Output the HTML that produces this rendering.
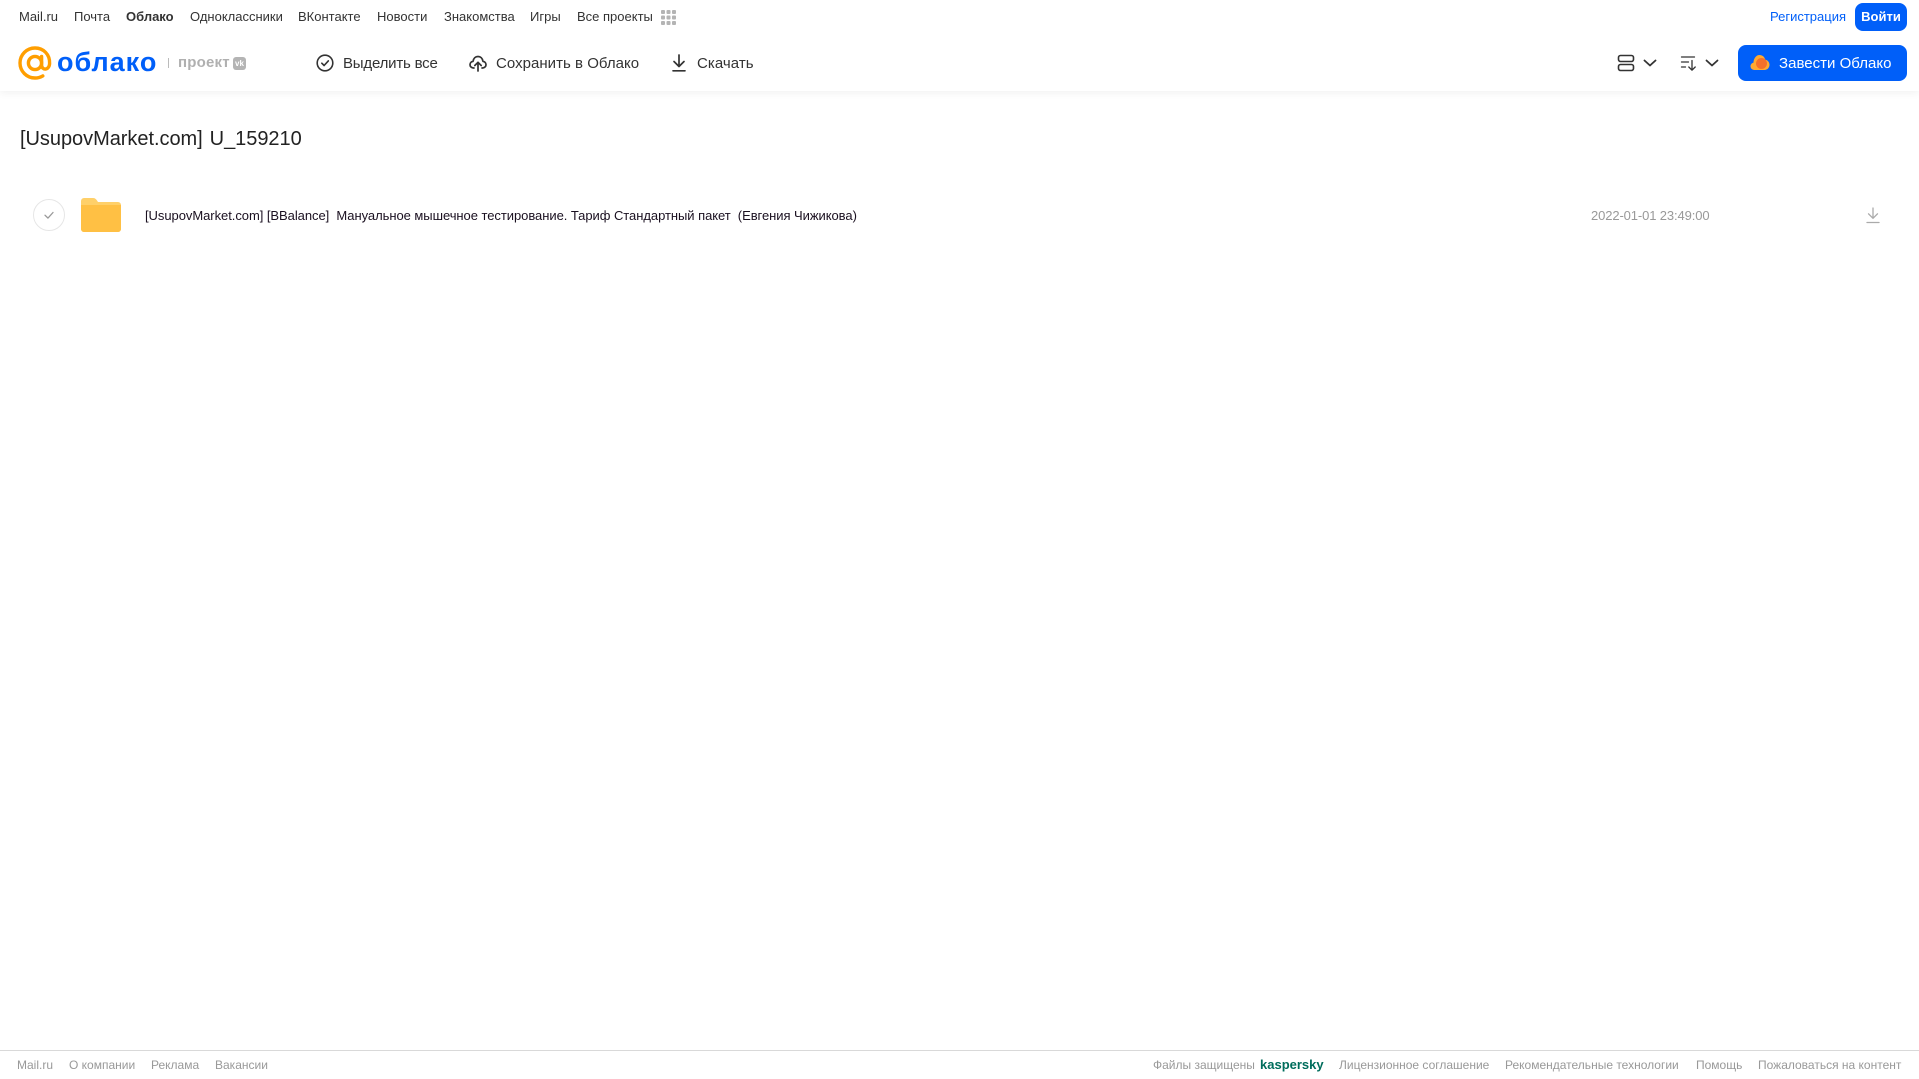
<!DOCTYPE html>
<html lang="ru">
<head>
<meta charset="utf-8">
<title>Облако</title>
<style>
html,body{margin:0;padding:0;background:#fff;}
body{width:1919px;height:1079px;position:relative;overflow:hidden;font-family:"Liberation Sans",sans-serif;}
.t{position:absolute;white-space:nowrap;line-height:20px;}
.n{font-size:13px;color:#333;top:7px;}
.a{font-size:15px;color:#333;top:54px;}
.f{font-size:12px;color:#999;top:1055px;}
svg{position:absolute;}
</style>
</head>
<body>
<div style="position:absolute;left:0;top:0;width:1919px;height:91px;background:#fff;box-shadow:0 2px 8px rgba(0,0,0,.06);"></div>

<span class="t n" style="left:19px">Mail.ru</span>
<span class="t n" style="left:74px">Почта</span>
<span class="t n" style="left:126px;font-weight:bold">Облако</span>
<span class="t n" style="left:190px">Одноклассники</span>
<span class="t n" style="left:298px">ВКонтакте</span>
<span class="t n" style="left:377px">Новости</span>
<span class="t n" style="left:444px">Знакомства</span>
<span class="t n" style="left:530px">Игры</span>
<span class="t n" style="left:577px">Все проекты</span>
<svg style="left:661px;top:10px" width="15" height="15" viewBox="0 0 15 15" fill="#b4b4b4"><rect x="0" y="0" width="4" height="4" rx="1"/><rect x="5.500" y="0" width="4" height="4" rx="1"/><rect x="11" y="0" width="4" height="4" rx="1"/><rect x="0" y="5.500" width="4" height="4" rx="1"/><rect x="5.500" y="5.500" width="4" height="4" rx="1"/><rect x="11" y="5.500" width="4" height="4" rx="1"/><rect x="0" y="11" width="4" height="4" rx="1"/><rect x="5.500" y="11" width="4" height="4" rx="1"/><rect x="11" y="11" width="4" height="4" rx="1"/></svg>

<span class="t n" style="left:1770px;color:#005ff9">Регистрация</span>
<div style="position:absolute;left:1855px;top:3px;width:52px;height:28px;border-radius:8px;background:#005ff9;color:#fff;font-size:13px;font-weight:bold;line-height:28px;text-align:center;">Войти</div>

<!-- logo -->
<svg style="left:18px;top:46px" width="34" height="34" viewBox="0 0 34 34" fill="none" stroke="#ff9e00" stroke-width="3.400" stroke-linecap="round"><circle cx="17" cy="17" r="6.600"/><path d="M23.600 10.500v8.500c0 5.600 7.600 5.600 8-1.500C32 8.500 25.500 2 17 2 8.700 2 2 8.700 2 17s6.700 15 15 15c3 0 5.500-.7 7.800-2.100"/></svg>
<span class="t" style="left:57px;top:42px;font-size:27px;line-height:40px;font-weight:bold;color:#005ff9;letter-spacing:1px;">облако</span>
<div style="position:absolute;left:168px;top:58px;width:1px;height:10px;background:#bbb;"></div>
<span class="t" style="left:178px;top:53px;font-size:15px;font-weight:bold;color:#b0b0b0;letter-spacing:.2px;">проект</span>
<div style="position:absolute;left:233px;top:57px;width:13px;height:13px;border-radius:3px;background:#b4b4b4;color:#fff;font-size:8px;font-weight:bold;line-height:13px;text-align:center;">vk</div>

<!-- actions -->
<svg style="left:316px;top:54px" width="18" height="18" viewBox="0 0 18 18" fill="none" stroke="#333" stroke-width="1.600" stroke-linecap="round" stroke-linejoin="round"><circle cx="9" cy="9" r="7.800"/><path d="M5.800 9.200l2.300 2.300 4.200-4.600"/></svg>
<span class="t a" style="left:343px;letter-spacing:-.2px">Выделить все</span>
<svg style="left:469px;top:54px" width="18" height="18" viewBox="0 0 18 18" fill="none" stroke="#333" stroke-width="1.700" stroke-linecap="round" stroke-linejoin="round"><path d="M5 14H4.500C2.500 14 1 12.500 1 10.700 1 9 2.300 7.600 4 7.400 4.500 4.300 6.500 2.500 9 2.500s4.500 1.800 5 4.900c1.700.2 3 1.600 3 3.300 0 1.800-1.500 3.300-3.500 3.300H13"/><path d="M9 17V8.500M5.800 11.500L9 8.300l3.200 3.200"/></svg>
<span class="t a" style="left:496px;letter-spacing:.03px">Сохранить в Облако</span>
<svg style="left:671px;top:54px" width="16" height="18" viewBox="0 0 16 18" fill="none" stroke="#333" stroke-width="1.700" stroke-linecap="round" stroke-linejoin="round"><path d="M8 1v11M3 7.500L8 12.500l5-5M2 16.800h12"/></svg>
<span class="t a" style="left:697px;letter-spacing:.05px">Скачать</span>

<!-- right controls -->
<svg style="left:1617px;top:54px" width="18" height="18" viewBox="0 0 18 18" fill="none" stroke="#333" stroke-width="1.600"><rect x="1.500" y="1.500" width="15" height="6" rx="2"/><rect x="1.500" y="10.500" width="15" height="6" rx="2"/></svg>
<svg style="left:1643px;top:59px" width="14" height="8" viewBox="0 0 14 8" fill="none" stroke="#333" stroke-width="1.800" stroke-linecap="round" stroke-linejoin="round"><path d="M1.500 1.500L7 6.500l5.500-5"/></svg>
<svg style="left:1680px;top:54px" width="18" height="18" viewBox="0 0 18 18" fill="none" stroke="#333" stroke-width="1.300" stroke-linecap="round" stroke-linejoin="round"><path d="M1.500 3h13M1.500 8h7M1.500 13h4M12 6.500V16M8.800 13L12 16.200 15.200 13"/></svg>
<svg style="left:1705px;top:59px" width="14" height="8" viewBox="0 0 14 8" fill="none" stroke="#333" stroke-width="1.800" stroke-linecap="round" stroke-linejoin="round"><path d="M1.500 1.500L7 6.500l5.500-5"/></svg>
<div style="position:absolute;left:1738px;top:45px;width:169px;height:36px;border-radius:8px;background:#005ff9;"></div>
<svg style="left:1750px;top:54px" width="20" height="17" viewBox="0 0 20 17"><path d="M4.500 16C2 16 .5 14.300.5 12.300c0-1.900 1.200-3.300 2.900-3.600C3.800 4 6.300 1 9.500 1c2.800 0 5 1.800 5.700 4.600 2.400.4 4.300 2.500 4.300 5.200 0 2.900-2.200 5.200-5 5.200z" fill="#ffa930"/><circle cx="11.500" cy="9.500" r="5.500" fill="#f4702a"/></svg>
<span class="t" style="left:1779px;top:54px;font-size:15px;color:#fff;letter-spacing:.02px;">Завести Облако</span>

<!-- title -->
<span class="t" style="left:20px;top:127px;font-size:20px;line-height:24px;color:#222;letter-spacing:-.04px;word-spacing:1.500px;">[UsupovMarket.com] U_159210</span>

<!-- row -->
<svg style="left:33px;top:199px" width="32" height="32" viewBox="0 0 32 32" fill="none"><circle cx="16" cy="16" r="15.500" stroke="#e6e6e6"/><path d="M12 16.200l3 2.900 5-5.600" stroke="#999" stroke-width="1.300" stroke-linecap="round" stroke-linejoin="round"/></svg>
<svg style="left:81px;top:198px" width="40" height="34" viewBox="0 0 40 34"><path d="M3 0h9c2 0 3 1 4 2.500L17 4h20a3 3 0 0 1 3 3v24a3 3 0 0 1-3 3H3a3 3 0 0 1-3-3V3a3 3 0 0 1 3-3z" fill="#ffd069"/><path d="M0 7h40v24a3 3 0 0 1-3 3H3a3 3 0 0 1-3-3z" fill="#ffc044"/></svg>
<span class="t" style="left:145px;top:206px;font-size:13px;color:#1a1020;white-space:pre;letter-spacing:-.05px;">[UsupovMarket.com] [BBalance]  Мануальное мышечное тестирование. Тариф Стандартный пакет  (Евгения Чижикова)</span>
<span class="t" style="left:1591px;top:206px;font-size:13px;color:#999;letter-spacing:-.12px;">2022-01-01 23:49:00</span>
<svg style="left:1866px;top:207px" width="14" height="17" viewBox="0 0 14 17" fill="none" stroke="#aaa" stroke-width="1.300" stroke-linecap="round" stroke-linejoin="round"><path d="M7 1v10M2.500 6.800L7 11.300l4.500-4.500"/><path d="M1 15.500h12"/></svg>

<!-- footer -->
<div style="position:absolute;left:0;top:1050px;width:1919px;height:1px;background:#d9d9d9;"></div>
<span class="t f" style="left:17px">Mail.ru</span>
<span class="t f" style="left:69px">О компании</span>
<span class="t f" style="left:151px">Реклама</span>
<span class="t f" style="left:215px">Вакансии</span>
<span class="t f" style="left:1153px">Файлы защищены</span>
<span class="t f" style="left:1260px;color:#006d5c;font-weight:bold;font-size:13px;">kaspersky</span>
<span class="t f" style="left:1339px">Лицензионное соглашение</span>
<span class="t f" style="left:1505px">Рекомендательные технологии</span>
<span class="t f" style="left:1696px">Помощь</span>
<span class="t f" style="left:1758px">Пожаловаться на контент</span>
</body>
</html>
